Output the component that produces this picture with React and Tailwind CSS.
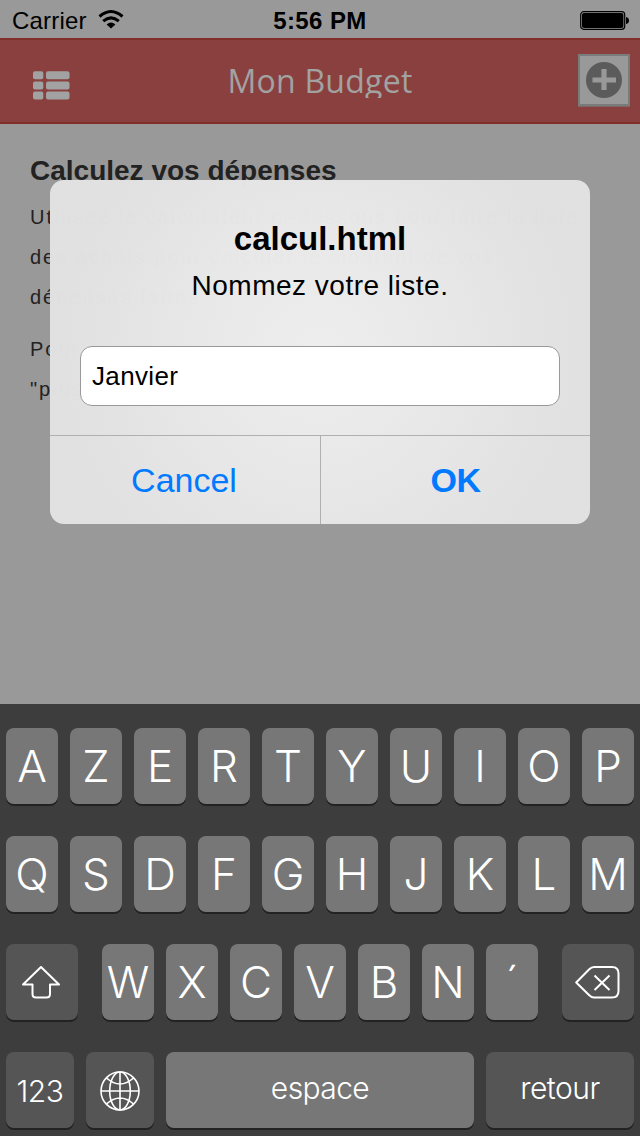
import React, { useState } from 'react';

const Key = ({ label, children, className = 'w-[52px]', dark = false, onClick }) => (
  <button
    onClick={onClick}
    aria-label={label}
    className={`h-[76px] shrink-0 rounded-[8px] shadow-[0_2px_0_#222] flex items-center justify-center text-white ${
      dark ? 'bg-[#555]' : 'bg-[#777]'
    } ${className}`}
  >
    {children}
  </button>
);

const LetterKey = ({ letter, onPress }) => (
  <Key label={letter} onClick={() => onPress(letter)}>
    <span className="font-['Inter',sans-serif] font-light text-[44px] leading-none pb-px">{letter}</span>
  </Key>
);

const StatusBar = () => (
  <div className="h-[38px] px-3 grid grid-cols-3 items-center text-black text-[24px] leading-none">
    <div className="flex items-center gap-[11px] pt-[3px]">
      <span className="tracking-[0.2px]">Carrier</span>
      <svg width="26" height="20" viewBox="0 0 26 20" className="-mt-[1px]">
        <path d="M1.5 6.5Q13-3.4 24.5 6.5" fill="none" stroke="#000" strokeWidth="3" />
        <path d="M5.2 11.2Q13 4.6 20.8 11.2" fill="none" stroke="#000" strokeWidth="3" />
        <path d="M8.6 14.4Q13 10.8 17.4 14.4L13 18.6Z" fill="#000" />
      </svg>
    </div>
    <span className="text-center font-bold tracking-[0.4px] pt-[3px]">5:56 PM</span>
    <svg width="50" height="20" viewBox="0 0 50 20" className="justify-self-end -mr-[2px] mt-[3px]">
      <rect x="0.7" y="0.7" width="44" height="17.6" rx="3" fill="none" stroke="#000" strokeWidth="1.2" />
      <rect x="2" y="2" width="41.4" height="15" rx="2" />
      <path d="M46 6Q49 6.5 49 9.5Q49 12.5 46 13Z" />
    </svg>
  </div>
);

const Header = () => (
  <header className="h-[86px] bg-[#89403e] border-y-2 border-[#812f2b] flex items-start justify-between pl-[33px] pr-[10px]">
    <svg width="37" height="29" viewBox="0 0 37 29" fill="#a2a2a2" className="mt-[31px]">
      {[0, 10.2, 20.4].map((y) => (
        <g key={y}>
          <rect x="0" y={y + 0.2} width="10.3" height="8" rx="2" />
          <rect x="13" y={y + 0.2} width="23.5" height="8" rx="2" />
        </g>
      ))}
    </svg>
    <h1 className="mt-[19px] mr-[8px] h-[39px] overflow-hidden font-['Open_Sans',sans-serif] text-[32px] leading-[43px] tracking-[0.25px] text-[#a2a2a2]">
      Mon Budget
    </h1>
    <button className="mt-[14px] w-[52px] h-[52px] bg-[#999] border-2 border-[#7a7c7c] shadow-[0_1px_0_#826565] flex items-center justify-center">
      <svg width="36" height="36" viewBox="0 0 36 36">
        <circle cx="18" cy="18" r="18" fill="#5b5b5b" />
        <path d="M15.4 7h5.2v8.4H30v5.2h-9.4V28h-5.2v-7.4H6.5v-5.2h8.9z" fill="#999" />
      </svg>
    </button>
  </header>
);

const Dialog = ({ value, onChange }) => (
  <div className="absolute left-[50px] top-[180px] w-[540px] h-[344px] rounded-[14px] flex flex-col text-black bg-[radial-gradient(circle_at_center,rgba(239,239,239,0.985)_0%,rgba(234,234,234,0.985)_35%,rgba(227,226,226,0.985)_80%)]">
    <div className="h-[255px] px-[30px] pt-[41px] text-center">
      <h2 className="text-[33px] leading-[36px] font-bold">calcul.html</h2>
      <p className="mt-[11px] text-[28px] leading-[36px] tracking-[0.5px]">Nommez votre liste.</p>
      <input
        value={value}
        onChange={(e) => onChange(e.target.value)}
        className="block mt-[42px] w-full h-[60px] rounded-[12px] border border-[#999] bg-white px-[11px] text-[26px] tracking-[0.35px] outline-none"
      />
    </div>
    <div className="flex-1 flex border-t border-[#b0b0b0] text-[34px] text-[#007aff]">
      <button className="w-[271px] border-r border-[#b0b0b0] pr-[2px]">Cancel</button>
      <button className="flex-1 font-bold tracking-[-0.5px]">OK</button>
    </div>
  </div>
);

const Keyboard = ({ onPress }) => (
  <div className="h-[432px] bg-[#3d3d3d] px-[6px] pt-6 flex flex-col gap-8">
    {['AZERTYUIOP', 'QSDFGHJKLM'].map((row) => (
      <div key={row} className="flex gap-3">
        {row.split('').map((l) => (
          <LetterKey key={l} letter={l} onPress={onPress} />
        ))}
      </div>
    ))}
    <div className="flex justify-between">
      <Key dark label="Maj" className="w-[72px]">
        <svg width="38" height="33" viewBox="0 0 38 33" fill="none" stroke="#fff" strokeWidth="2" strokeLinejoin="round" className="-ml-[2px]">
          <path d="M19 1L37 18.5H28V28Q28 31.5 24.5 31.5H14Q10.5 31.5 10.5 28V18.5H1Z" />
        </svg>
      </Key>
      <div className="flex gap-3">
        {'WXCVBN´'.split('').map((l) => (
          <LetterKey key={l} letter={l} onPress={onPress} />
        ))}
      </div>
      <Key dark label="Effacer" className="w-[72px]">
        <svg width="45" height="33" viewBox="0 0 45 33" fill="none" stroke="#fff" strokeWidth="2" strokeLinejoin="round" className="-ml-[1px]">
          <path d="M1.2 16.5L14 3.5Q16.5 1 19 1H37Q43.5 1 43.5 7.5V25Q43.5 31.5 37 31.5H19Q16.5 31.5 14 29Z" />
          <path d="M19.5 9.5L34.5 24M34.5 9.5L19.5 24" />
        </svg>
      </Key>
    </div>
    <div className="flex gap-3 font-['Inter',sans-serif] font-light text-[30px] leading-none">
      <Key dark className="w-[68px]">
        <span className="tracking-[-0.5px] pt-[2px]">123</span>
      </Key>
      <Key dark label="Clavier suivant" className="w-[68px]">
        <svg width="40" height="40" viewBox="0 0 40 40" fill="none" stroke="#fff" strokeWidth="1.6" className="mt-[2px]">
          <circle cx="20" cy="20" r="19" />
          <ellipse cx="20" cy="20" rx="10.3" ry="19" />
          <path d="M20 1V39M1 20H39M6.5 7Q20 19 33.5 7M6.5 33Q20 21 33.5 33" />
        </svg>
      </Key>
      <Key className="w-[308px]" onClick={() => onPress(' ')}>
        <span className="tracking-[-0.6px] pb-[4px]">espace</span>
      </Key>
      <Key dark className="w-[148px]">
        <span className="tracking-[-0.5px] pb-[4px]">retour</span>
      </Key>
    </div>
  </div>
);

export default function App() {
  const [name, setName] = useState('Janvier');

  return (
    <div className="relative w-[640px] h-[1136px] overflow-hidden bg-[#999] flex flex-col font-['Liberation_Sans',Arial,sans-serif]">
      <StatusBar />
      <Header />

      <main className="flex-1 px-[30px] pt-[31px] text-[#222]">
        <h2 className="text-[28px] leading-[32px] font-bold">Calculez vos dépenses</h2>
        <div className="mt-[10px] text-[20px] leading-[40px] tracking-[2px] whitespace-nowrap">
          <p>
            Utilisez le calculateur ci-dessous pour faire la liste
            <br />
            des achats pour calculer le montant de vos
            <br />
            dépenses faites.
          </p>
          <p className="mt-[12px]">
            Pour ajouter
            <br />
            "plus"
          </p>
        </div>
      </main>

      <Keyboard onPress={(l) => setName(name + l)} />
      <Dialog value={name} onChange={setName} />
    </div>
  );
}
